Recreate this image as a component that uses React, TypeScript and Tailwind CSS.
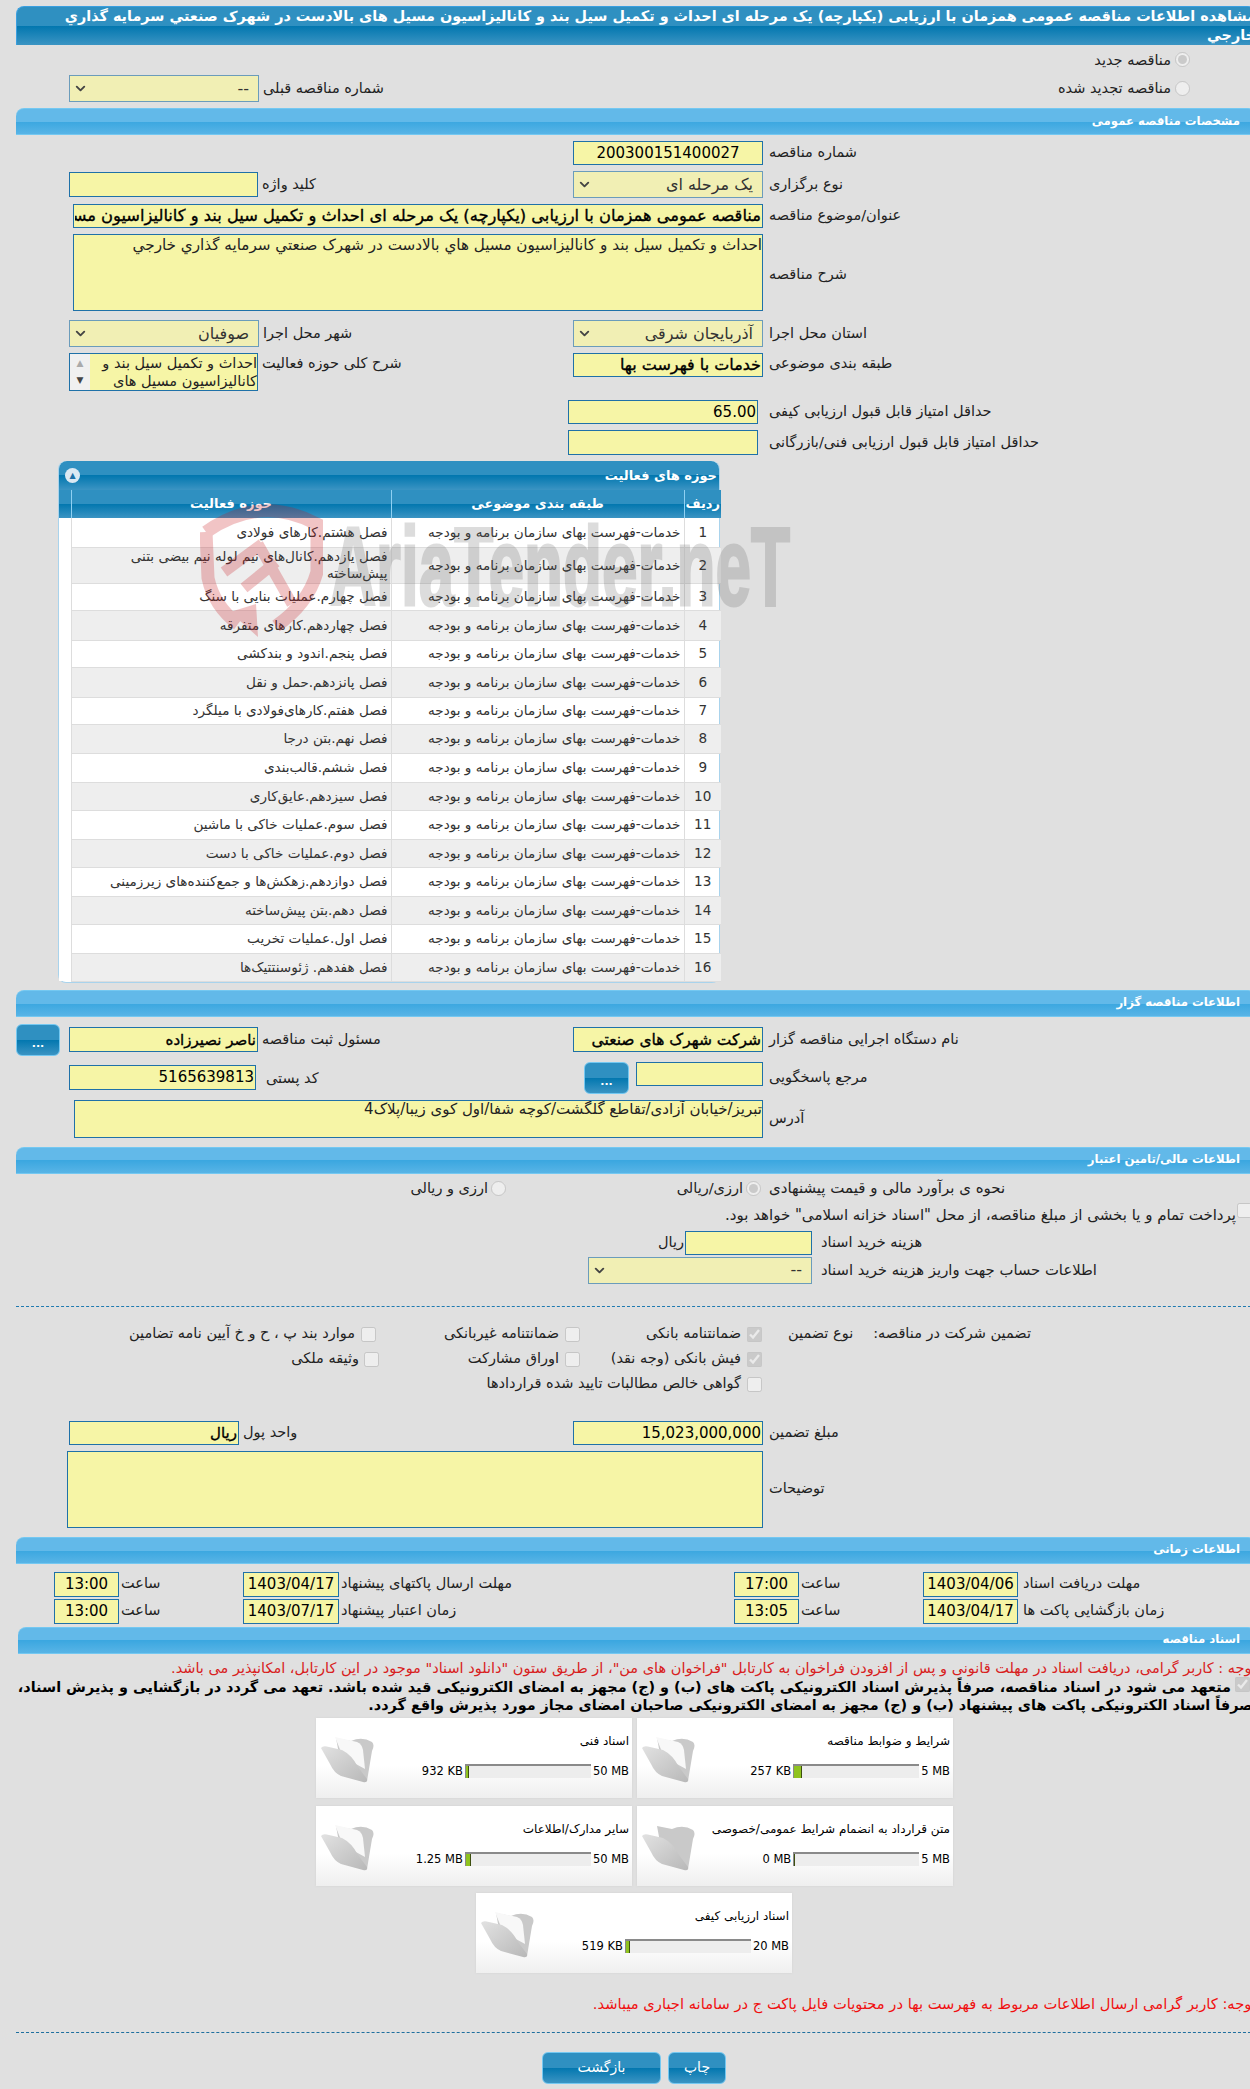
import { ChevronDown } from "lucide-react";
import type { ReactNode } from "react";

const activities = [
  { id: 1, name: "فصل هشتم.کارهای فولادی", row: "h-[29px]" },
  { id: 2, name: "فصل یازدهم.کانال‌های نیم لوله نیم بیضی بتنی پیش‌ساخته", row: "h-[36px]" },
  { id: 3, name: "فصل چهارم.عملیات بنایی با سنگ", row: "h-[27px]" },
  { id: 4, name: "فصل چهاردهم.کارهای متفرقه", row: "h-[30px]" },
  { id: 5, name: "فصل پنجم.اندود و بندکشی", row: "h-[27px]" },
  { id: 6, name: "فصل پانزدهم.حمل و نقل", row: "h-[30px]" },
  { id: 7, name: "فصل هفتم.کارهای‌فولادی با میلگرد", row: "h-[27px]" },
  { id: 8, name: "فصل نهم.بتن درجا", row: "h-[29px]" },
  { id: 9, name: "فصل ششم.قالب‌بندی", row: "h-[29px]" },
  { id: 10, name: "فصل سیزدهم.عایق‌کاری", row: "h-[28px]" },
  { id: 11, name: "فصل سوم.عملیات خاکی با ماشین", row: "h-[29px]" },
  { id: 12, name: "فصل دوم.عملیات خاکی با دست", row: "h-[28px]" },
  { id: 13, name: "فصل دوازدهم.زهکش‌ها و جمع‌کننده‌های زیرزمینی", row: "h-[29px]" },
  { id: 14, name: "فصل دهم.بتن پیش‌ساخته", row: "h-[28px]" },
  { id: 15, name: "فصل اول.عملیات تخریب", row: "h-[29px]" },
  { id: 16, name: "فصل هفدهم. ژئوسنتتیک‌ها", row: "h-[28px]" },
];

const darkBar =
  "bg-[linear-gradient(to_bottom,#2f90c1_0%,#2f90c1_50%,#0277af_50%,#3b94c3_100%)]";
const heavy = "[-webkit-text-stroke:0.35px_black]";

function Label({ children, className = "" }: { children: ReactNode; className?: string }) {
  return (
    <span dir="rtl" className={`text-left whitespace-nowrap text-[#222] ${className.includes("text-[") ? "" : "text-[14.5px]"} ${className}`}>
      {children}
    </span>
  );
}

function TextBox({
  value = "",
  className = "",
  align = "text-right",
}: {
  value?: string;
  className?: string;
  align?: string;
}) {
  return (
    <input
      readOnly
      dir="rtl"
      value={value}
      className={`box-border shrink-0 border border-[#1f71a8] bg-[#f6f5a6] px-px text-black outline-none ${align} ${className}`}
    />
  );
}

function Picker({ value, className = "" }: { value: string; className?: string }) {
  return (
    <div
      dir="rtl"
      className={`box-border flex shrink-0 items-center justify-between border border-[#6b9cbb] bg-[#f1efb4] pr-[9px] pl-[3px] text-[16px] text-[#333] ${className}`}
    >
      <span className="whitespace-nowrap">{value}</span>
      <ChevronDown size={15} strokeWidth={3} className="text-[#444]" />
    </div>
  );
}

function SectionBar({ title, className = "" }: { title: string; className?: string }) {
  return (
    <div
      dir="rtl"
      className={`box-border flex h-[27px] items-center rounded-t-lg border-y border-[#74c8f1] bg-[linear-gradient(to_bottom,#62b9e9_0%,#62b9e9_50%,#3ba7e0_50%,#58b4e6_100%)] pr-[16px] text-[11.7px] font-bold text-white ${className}`}
    >
      {title}
    </div>
  );
}

function MoreButton({ className = "" }: { className?: string }) {
  return (
    <button
      type="button"
      className={`box-border flex shrink-0 items-center justify-center rounded-md border border-[#74c8f1] pt-2 text-[11px] leading-none font-bold text-white ${darkBar} ${className}`}
    >
      ...
    </button>
  );
}

function Tick({ checked = false, kind = "checkbox", className = "" }: { checked?: boolean; kind?: string; className?: string }) {
  return (
    <input
      type={kind}
      disabled
      defaultChecked={checked}
      className={`m-0 h-[15px] w-[15px] shrink-0 ${className}`}
    />
  );
}

function Folder({ empty = false }: { empty?: boolean }) {
  return (
    <svg viewBox="0 0 54 48" className="h-[48px] w-[54px] shrink-0">
      <defs>
        <linearGradient id="flap" x1="0" y1="0" x2="1" y2="1">
          <stop offset="0" stopColor="#e2e2e2" />
          <stop offset="1" stopColor="#b8b8b8" />
        </linearGradient>
      </defs>
      <path d="M15 3 L30 6 Q41 1 51 7 Q54 10 51 16 L46 46 L20 30 Z" fill="#c9c9c9" />
      {!empty && <path d="M14 2 L36 7 Q41 9 42 15 L44 34 L22 22 Z" fill="#f8f8f8" />}
      <path
        d="M0 13 Q2 10 8 12 L21 15 Q31 20 37 32 L46 44 Q47 48 42 47 L20 41 Q13 38 9 29 Z"
        fill="url(#flap)"
      />
    </svg>
  );
}

function DocCard({
  title,
  used,
  limit,
  fill,
  empty,
}: {
  title: string;
  used: string;
  limit: string;
  fill: string;
  empty?: boolean;
}) {
  return (
    <div className="box-border flex h-[80px] w-[316px] shrink-0 bg-[linear-gradient(to_bottom,#ffffff_0%,#ffffff_60%,#efefef_100%)] pt-[17px] pl-[5px] shadow-[0_0_2px_#cfcfcf]">
      <Folder empty={empty} />
      <div className="flex min-w-0 flex-1 flex-col items-end pr-[3px]">
        <span dir="rtl" className="mt-[-3px] h-[24px] text-[12px] whitespace-nowrap text-black">
          {title}
        </span>
        <div className="mt-[7px] flex items-center gap-[2px] text-[11.5px] text-black">
          <span className="whitespace-nowrap">{used}</span>
          <div className="box-border h-[14px] w-[126px] border-t-2 border-l border-[#8a8a8a] bg-[#ededed]">
            <div className={`h-full border-r border-[#3d4f10] bg-[#8fc31f] ${fill}`} />
          </div>
          <span className="whitespace-nowrap">{limit}</span>
        </div>
      </div>
    </div>
  );
}

function Shield() {
  return (
    <svg viewBox="0 0 123 137" fill="none" className="absolute top-[500px] left-[200px] h-[137px] w-[123px] opacity-25">
      <path d="M6 32 Q60 -6 117 24 L117 72 Q108 104 76 126" stroke="#c8181e" strokeWidth="13" />
      <path d="M6 32 L8 78 Q14 106 38 124" stroke="#c8181e" strokeWidth="13" />
      <path d="M30 112 L58 137 L56 104 Z" fill="#c8181e" />
      <path d="M24 72 L62 44 M44 88 L76 62 M58 44 L92 104" stroke="#c8181e" strokeWidth="11" />
    </svg>
  );
}

export default function App() {
  return (
    <div className="relative h-[2089px] w-[1250px] overflow-hidden bg-[#e0e0e0] pt-[6px] font-['DejaVu_Sans',Tahoma,sans-serif]">
      <div className="ml-4 w-[1240px]">
        <div
          dir="rtl"
          className={`box-border h-[39px] rounded-t-lg border-t border-l border-[#3a9fe0] text-[14.4px] leading-[19px] font-bold whitespace-nowrap text-white ${darkBar}`}
        >
          مشاهده اطلاعات مناقصه عمومی همزمان با ارزیابی (یکپارچه) یک مرحله ای احداث و تکمیل سیل بند و کانالیزاسیون مسیل های بالادست در شهرک صنعتي سرمایه گذاري
          <br />
          خارجي
        </div>

        <div className="mt-[2px] flex h-[28px] w-[1174px] items-center justify-end gap-[4px]">
          <Label>مناقصه جدید</Label>
          <Tick kind="radio" checked className="-mt-[4px]" />
        </div>
        <div className="flex h-[27px] w-[1174px] items-center">
          <Picker value="--" className="ml-[53px] h-[27px] w-[190px]" />
          <Label className="ml-1">شماره مناقصه قبلی</Label>
          <div className="flex flex-1 items-center justify-end gap-[4px]">
            <Label>مناقصه تجدید شده</Label>
            <Tick kind="radio" />
          </div>
        </div>

        <SectionBar title="مشخصات مناقصه عمومی" className="mt-[6px]" />

        <div className="mt-[6px] flex h-[24px] items-center pl-[557px]">
          <TextBox value="200300151400027" align="text-center" className="h-[24px] w-[190px] text-[15px]" />
          <Label className="ml-[6px]">شماره مناقصه</Label>
        </div>
        <div className="mt-[6px] flex h-[27px] items-center pl-[53px]">
          <TextBox className="h-[25px] w-[189px]" />
          <Label className="ml-1 w-[311px]">کلید واژه</Label>
          <Picker value="یک مرحله ای" className="h-[27px] w-[190px]" />
          <Label className="ml-[6px]">نوع برگزاری</Label>
        </div>
        <div className="mt-[6px] flex h-[24px] items-center pl-[57px]">
          <TextBox
            value="مناقصه عمومی همزمان با ارزیابی (یکپارچه) یک مرحله ای احداث و تکمیل سیل بند و کانالیزاسیون مسیل های بالادست در شهرک صنعتی سرمایه گذاری خارجی"
            className={`h-[24px] w-[690px] text-[16.3px] ${heavy}`}
          />
          <Label className="ml-[6px]">عنوان/موضوع مناقصه</Label>
        </div>
        <div className="mt-[6px] flex h-[77px] items-center pl-[57px]">
          <textarea
            readOnly
            dir="rtl"
            value="احداث و تکمیل سیل بند و کانالیزاسیون مسیل هاي بالادست در شهرک صنعتي سرمایه گذاري خارجي"
            className="box-border h-[77px] w-[690px] shrink-0 resize-none overflow-hidden border border-[#1f71a8] bg-[#f6f5a6] pt-[2px] text-[15.2px] leading-[17px] text-[#222] outline-none"
          />
          <Label className="mt-[4px] ml-[6px]">شرح مناقصه</Label>
        </div>
        <div className="mt-[9px] flex h-[27px] items-center pl-[53px]">
          <Picker value="صوفیان" className="h-[27px] w-[190px]" />
          <Label className="ml-1 w-[310px]">شهر محل اجرا</Label>
          <Picker value="آذربایجان شرقی" className="h-[27px] w-[190px]" />
          <Label className="ml-[6px]">استان محل اجرا</Label>
        </div>
        <div className="mt-[6px] flex h-[38px] items-start pl-[53px]">
          <div className="box-border flex h-[38px] w-[189px] shrink-0 border border-[#1f71a8] bg-[#f6f5a6]">
            <div className="flex w-[20px] flex-col items-center justify-between bg-[#f0f0f0] py-[5px] text-[9px] leading-none">
              <span className="text-[#aaa]">▲</span>
              <span className="text-[#444]">▼</span>
            </div>
            <div dir="rtl" className="flex-1 text-[14.5px] leading-[18px] text-[#222]">
              احداث و تکمیل سیل بند و کانالیزاسیون مسیل های
            </div>
          </div>
          <Label className="ml-1 w-[311px]">شرح کلی حوزه فعالیت</Label>
          <TextBox value="خدمات با فهرست بها" className={`h-[24px] w-[190px] text-[16px] ${heavy}`} />
          <Label className="ml-[6px]">طبقه بندی موضوعی</Label>
        </div>
        <div className="mt-[9px] flex h-[24px] items-center pl-[552px]">
          <TextBox value="65.00" className="h-[24px] w-[190px] text-[15px]" />
          <Label className="ml-[11px]">حداقل امتیاز قابل قبول ارزیابی کیفی</Label>
        </div>
        <div className="mt-[6px] flex h-[25px] items-center pl-[552px]">
          <TextBox className="h-[25px] w-[190px]" />
          <Label className="ml-[11px]">حداقل امتیاز قابل قبول ارزیابی فنی/بازرگانی</Label>
        </div>

        <div className="mt-[6px] ml-[42px] w-[662px] rounded-lg border border-t-0 border-[#a9d3ec] bg-white">
          <div
            dir="rtl"
            className={`flex h-[29px] items-center justify-between rounded-t-lg pr-[2px] pl-[6px] text-[13px] font-bold text-white ${darkBar}`}
          >
            <span>حوزه های فعالیت</span>
            <span className="flex h-[15px] w-[15px] items-center justify-center rounded-full bg-[#dbe9f3] text-[8px] leading-none text-[#1f71a8]">
              ▲
            </span>
          </div>
          <table dir="rtl" className="w-full table-fixed border-collapse text-[13.6px] text-[#333]">
            <colgroup>
              <col className="w-[37px]" />
              <col className="w-[293px]" />
              <col className="w-[320px]" />
              <col className="w-[12px]" />
            </colgroup>
            <thead>
              <tr className={`h-[28px] text-[13px] font-bold text-white ${darkBar}`}>
                <th className="border-l border-[#8fd0f2] text-center font-bold">ردیف</th>
                <th className="border-l border-[#8fd0f2] text-center font-bold">طبقه بندی موضوعی</th>
                <th className="border-l border-[#8fd0f2] text-center font-bold">حوزه فعالیت</th>
                <th />
              </tr>
            </thead>
            <tbody>
              {activities.map((item) => (
                <tr key={item.id} className={`${item.row} even:bg-[#eeeeee]`}>
                  <td className="border-b border-l border-[#dddddd] text-center">{item.id}</td>
                  <td className="border-b border-l border-[#dddddd] pr-[3px] whitespace-nowrap">
                    خدمات-فهرست بهای سازمان برنامه و بودجه
                  </td>
                  <td className="border-b border-l border-[#dddddd] px-[3px] leading-[17px]">{item.name}</td>
                  <td className="bg-white" />
                </tr>
              ))}
            </tbody>
          </table>
        </div>

        <SectionBar title="اطلاعات مناقصه گزار" className="mt-[7px]" />

        <div className="mt-[7px] flex h-[32px] items-center">
          <MoreButton className="h-[32px] w-[44px]" />
          <TextBox value="ناصر نصیرزاده" className={`ml-[9px] h-[25px] w-[189px] text-[15px] ${heavy}`} />
          <Label className="ml-1 w-[311px]">مسئول ثبت مناقصه</Label>
          <TextBox value="شرکت شهرک های صنعتی" className={`h-[25px] w-[190px] text-[15.5px] ${heavy}`} />
          <Label className="ml-[6px]">نام دستگاه اجرایی مناقصه گزار</Label>
        </div>
        <div className="mt-[6px] flex h-[32px] items-start pl-[53px]">
          <TextBox value="5165639813" className="mt-[3px] h-[25px] w-[187px] text-[15px]" />
          <Label className="mt-[6px] ml-[10px] w-[318px]">کد پستی</Label>
          <MoreButton className="h-[32px] w-[45px]" />
          <TextBox className="ml-[7px] h-[24px] w-[127px]" />
          <Label className="mt-[5px] ml-[6px]">مرجع پاسخگویی</Label>
        </div>
        <div className="mt-[6px] flex h-[38px] items-center pl-[58px]">
          <textarea
            readOnly
            dir="rtl"
            value="تبریز/خیابان آزادی/تقاطع گلگشت/کوچه شفا/اول کوی زیبا/پلاک4"
            className="box-border h-[38px] w-[689px] shrink-0 resize-none overflow-hidden border border-[#1f71a8] bg-[#f6f5a6] text-[15px] leading-[17px] text-[#222] outline-none"
          />
          <Label className="ml-[6px]">آدرس</Label>
        </div>

        <SectionBar title="اطلاعات مالی/تامین اعتبار" className="mt-[9px]" />

        <div className="mt-[5px] flex h-[20px] items-center">
          <div className="flex w-[490px] items-center justify-end gap-[3px]">
            <Label>ارزی و ریالی</Label>
            <Tick kind="radio" />
          </div>
          <div className="flex w-[255px] items-center justify-end gap-[3px]">
            <Label>ارزی/ریالی</Label>
            <Tick kind="radio" checked />
          </div>
          <Label className="ml-[8px] text-[15px]">نحوه ی برآورد مالی و قیمت پیشنهادی</Label>
        </div>
        <div className="mt-[7px] flex h-[20px] w-[1236px] items-center justify-end gap-px">
          <Label className="text-[15px]">پرداخت تمام و یا بخشی از مبلغ مناقصه، از محل "اسناد خزانه اسلامی" خواهد بود.</Label>
          <Tick className="mb-[10px]" />
        </div>
        <div className="mt-[5px] flex h-[24px] items-center justify-start pl-[642px]">
          <Label className="mr-px">ریال</Label>
          <TextBox className="h-[24px] w-[127px]" />
          <Label className="ml-[9px]">هزینه خرید اسناد</Label>
        </div>
        <div className="mt-[2px] flex h-[27px] items-center pl-[572px]">
          <Picker value="--" className="h-[27px] w-[224px]" />
          <Label className="ml-[9px] text-[14.8px]">اطلاعات حساب جهت واریز هزینه خرید اسناد</Label>
        </div>

        <div className="mt-[22px] border-t border-dashed border-[#1f7ab0]" />

        <div className="mt-[15px] flex h-[25px] items-center">
          <div className="flex w-[360px] items-center justify-end gap-[6px]">
            <Label>موارد بند پ ، ح و خ آیین نامه تضامین</Label>
            <Tick />
          </div>
          <div className="flex w-[204px] items-center justify-end gap-[6px]">
            <Label>ضمانتنامه غیربانکی</Label>
            <Tick />
          </div>
          <div className="flex w-[182px] items-center justify-end gap-[6px]">
            <Label>ضمانتنامه بانکی</Label>
            <Tick checked />
          </div>
          <Label className="ml-[26px]">نوع تضمین</Label>
          <Label className="ml-[20px]">تضمین شرکت در مناقصه:</Label>
        </div>
        <div className="flex h-[25px] items-center">
          <div className="flex w-[363px] items-center justify-end gap-[5px]">
            <Label>وثیقه ملکی</Label>
            <Tick />
          </div>
          <div className="flex w-[201px] items-center justify-end gap-[6px]">
            <Label>اوراق مشارکت</Label>
            <Tick />
          </div>
          <div className="flex w-[182px] items-center justify-end gap-[6px]">
            <Label>فیش بانکی (وجه نقد)</Label>
            <Tick checked />
          </div>
        </div>
        <div className="flex h-[25px] w-[746px] items-center justify-end gap-[6px]">
          <Label>گواهی خالص مطالبات تایید شده قراردادها</Label>
          <Tick />
        </div>

        <div className="mt-[24px] flex h-[24px] items-center pl-[53px]">
          <TextBox value="ریال" className={`h-[24px] w-[170px] text-[15px] ${heavy}`} />
          <Label className="ml-1 w-[330px]">واحد پول</Label>
          <TextBox value="15,023,000,000" className="h-[24px] w-[190px] text-[15px]" />
          <Label className="ml-[6px]">مبلغ تضمین</Label>
        </div>
        <div className="mt-[6px] flex h-[77px] items-center pl-[51px]">
          <textarea
            readOnly
            dir="rtl"
            value=""
            className="box-border h-[77px] w-[696px] shrink-0 resize-none border border-[#1f71a8] bg-[#f6f5a6] outline-none"
          />
          <Label className="ml-[6px]">توضیحات</Label>
        </div>

        <SectionBar title="اطلاعات زمانی" className="mt-[9px]" />

        <div className="mt-[8px] flex h-[25px] items-center pl-[38px]">
          <TextBox value="13:00" align="text-center" className="h-[25px] w-[65px] text-[15px]" />
          <Label className="ml-[2px] w-[122px]">ساعت</Label>
          <TextBox value="1403/04/17" align="text-center" className="h-[25px] w-[96px] text-[15px]" />
          <Label className="ml-[2px] w-[393px]">مهلت ارسال پاکتهای پیشنهاد</Label>
          <TextBox value="17:00" align="text-center" className="h-[25px] w-[65px] text-[15px]" />
          <Label className="ml-[2px] w-[122px]">ساعت</Label>
          <TextBox value="1403/04/06" align="text-center" className="h-[25px] w-[95px] text-[15px]" />
          <Label className="ml-[5px]">مهلت دریافت اسناد</Label>
        </div>
        <div className="mt-[2px] flex h-[25px] items-center pl-[38px]">
          <TextBox value="13:00" align="text-center" className="h-[25px] w-[65px] text-[15px]" />
          <Label className="ml-[2px] w-[122px]">ساعت</Label>
          <TextBox value="1403/07/17" align="text-center" className="h-[25px] w-[96px] text-[15px]" />
          <Label className="ml-[2px] w-[393px]">زمان اعتبار پیشنهاد</Label>
          <TextBox value="13:05" align="text-center" className="h-[25px] w-[65px] text-[15px]" />
          <Label className="ml-[2px] w-[122px]">ساعت</Label>
          <TextBox value="1403/04/17" align="text-center" className="h-[25px] w-[95px] text-[15px]" />
          <Label className="ml-[5px]">زمان بازگشایی پاکت ها</Label>
        </div>

        <SectionBar title="اسناد مناقصه" className="mt-[3px] ml-[2px]" />

        <div dir="rtl" className="mt-[4px] h-[20px] text-[14.5px] leading-[20px] whitespace-nowrap text-[#d82020]">
          توجه : کاربر گرامی، دریافت اسناد در مهلت قانونی و پس از افزودن فراخوان به کارتابل "فراخوان های من"، از طریق ستون "دانلود اسناد" موجود در این کارتابل، امکانپذیر می باشد.
        </div>
        <div className="relative h-[36px] text-[14.4px] leading-[18px] font-bold whitespace-nowrap text-black">
          <Tick checked className="absolute top-[-1px] left-[1219px]" />
          <div dir="rtl" className="w-[1215px]">
            متعهد می شود در اسناد مناقصه، صرفاً پذیرش اسناد الکترونیکی پاکت های (ب) و (ج) مجهز به امضای الکترونیکی قید شده باشد. تعهد می گردد در بازگشایی و پذیرش اسناد،
          </div>
          <div dir="rtl" className="w-[1237px]">
            صرفاً اسناد الکترونیکی پاکت های پیشنهاد (ب) و (ج) مجهز به امضای الکترونیکی صاحبان امضای مجاز مورد پذیرش واقع گردد.
          </div>
        </div>

        <div className="mt-[4px] flex gap-[5px] pl-[300px]">
          <DocCard title="اسناد فنی" used="932 KB" limit="50 MB" fill="w-[3px]" />
          <DocCard title="شرایط و ضوابط مناقصه" used="257 KB" limit="5 MB" fill="w-[8px]" />
        </div>
        <div className="mt-[8px] flex gap-[5px] pl-[300px]">
          <DocCard title="سایر مدارک/اطلاعات" used="1.25 MB" limit="50 MB" fill="w-[5px]" />
          <DocCard title="متن قرارداد به انضمام شرایط عمومی/خصوصی" used="0 MB" limit="5 MB" fill="w-0" empty />
        </div>
        <div className="mt-[7px] flex pl-[460px]">
          <DocCard title="اسناد ارزیابی کیفی" used="519 KB" limit="20 MB" fill="w-[4px]" />
        </div>

        <div dir="rtl" className="mt-[21px] h-[20px] text-[14.7px] leading-[20px] whitespace-nowrap text-[#f01010]">
          توجه: کاربر گرامی ارسال اطلاعات مربوط به فهرست بها در محتویات فایل پاکت ج در سامانه اجباری میباشد.
        </div>

        <div className="mt-[18px] border-t border-dashed border-[#1f6f9f]" />

        <div className="mt-[19px] flex justify-start gap-[7px] pl-[526px]">
          <button
            type="button"
            className={`h-[32px] w-[119px] rounded-md border border-[#74c8f1] text-[14px] text-white ${darkBar}`}
          >
            بازگشت
          </button>
          <button
            type="button"
            className={`h-[32px] w-[58px] rounded-md border border-[#74c8f1] text-[14px] text-white ${darkBar}`}
          >
            چاپ
          </button>
        </div>
      </div>

      <Shield />
      <div className="pointer-events-none absolute top-[511px] left-[330px] origin-left scale-x-[0.57] font-['Liberation_Sans',sans-serif] text-[112px] leading-none font-bold whitespace-nowrap text-[#555] opacity-20 [-webkit-text-stroke:3px_#555]">
        AriaTender.neT
      </div>
    </div>
  );
}
